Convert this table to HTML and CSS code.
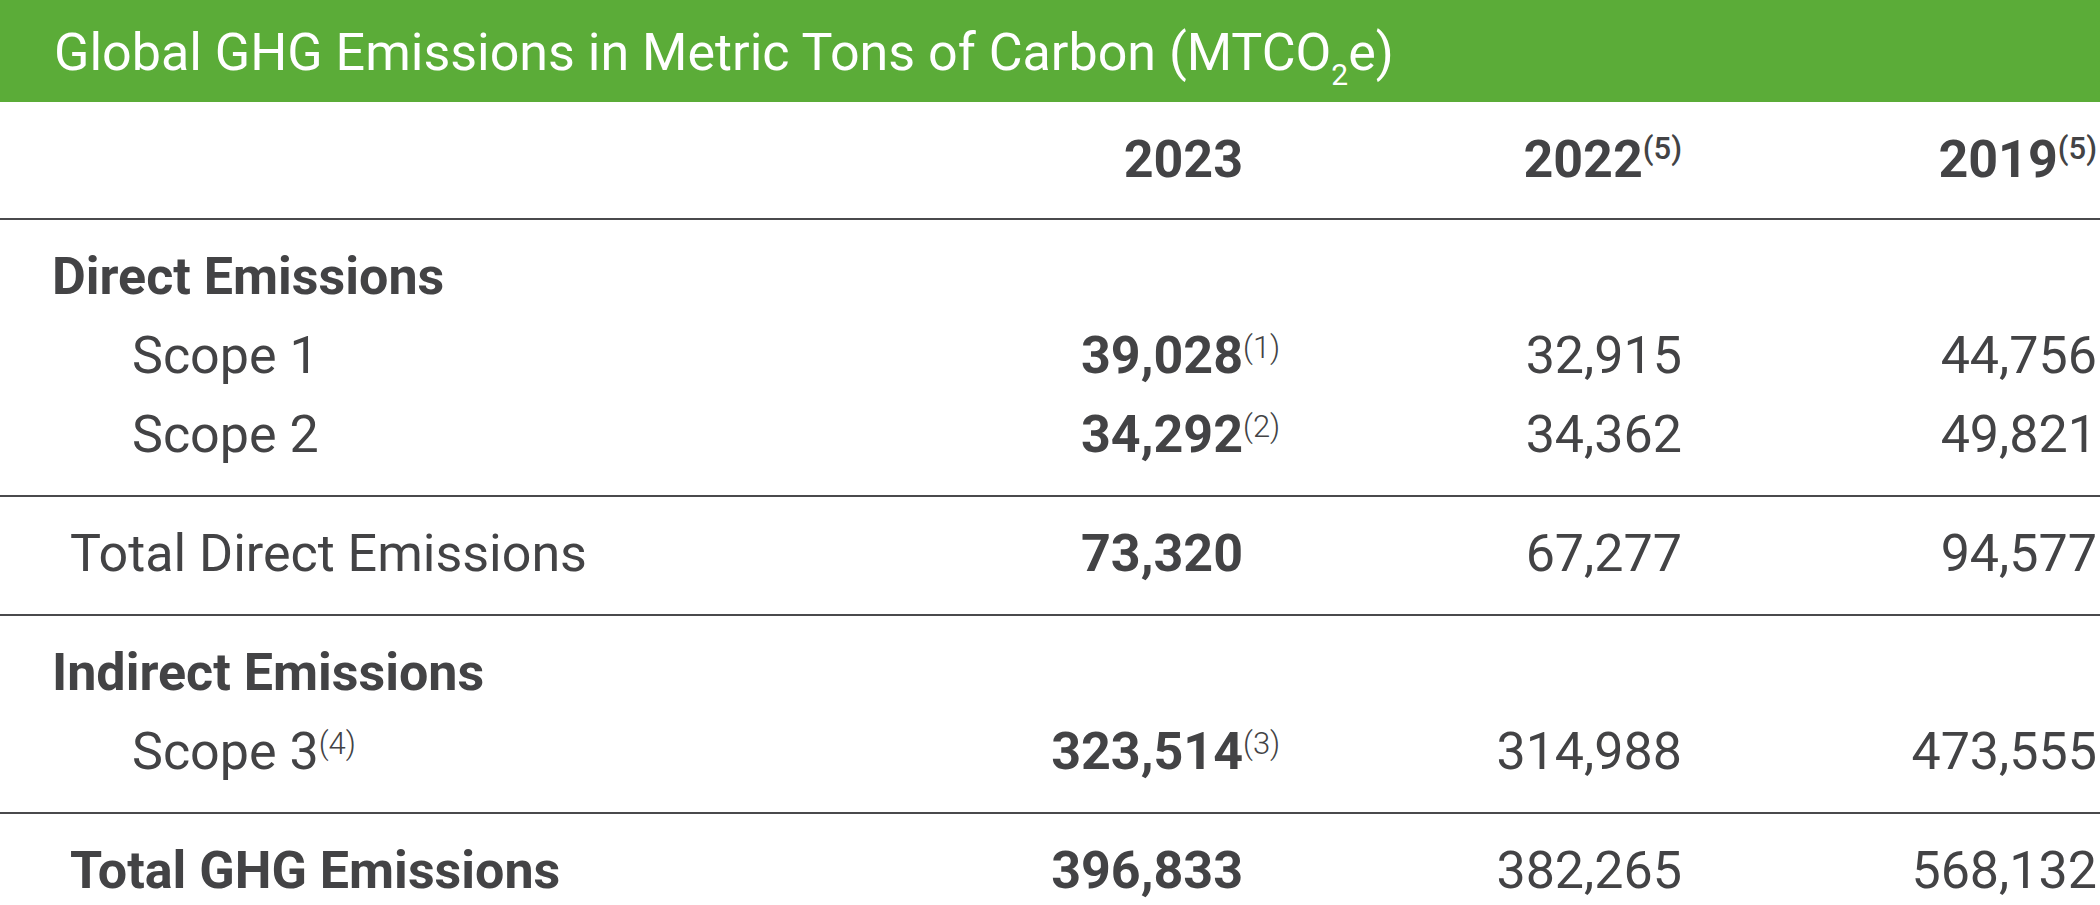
FILE: index.html
```html
<!DOCTYPE html>
<html lang="en">
<head>
<meta charset="utf-8">
<title>Global GHG Emissions</title>
<link rel="stylesheet" href="styles.css">
</head>
<body>
<section class="ghg">
  <h1 class="title">Global GHG Emissions in Metric Tons of Carbon (MTCO<sub class="sub">2</sub>e)</h1>

  <div class="group head">
    <div class="row">
      <div class="lbl"></div>
      <div class="num c1">2023<span class="fn"></span></div>
      <div class="num">2022<sup class="hsup">(5)</sup></div>
      <div class="num">2019<sup class="hsup">(5)</sup></div>
    </div>
  </div>

  <div class="group">
    <div class="row">
      <div class="lbl sect">Direct Emissions</div>
      <div></div><div></div><div></div>
    </div>
    <div class="row">
      <div class="lbl scope">Scope 1</div>
      <div class="num c1"><b>39,028</b><span class="fn">(1)</span></div>
      <div class="num">32,915</div>
      <div class="num">44,756</div>
    </div>
    <div class="row">
      <div class="lbl scope">Scope 2</div>
      <div class="num c1"><b>34,292</b><span class="fn">(2)</span></div>
      <div class="num">34,362</div>
      <div class="num">49,821</div>
    </div>
  </div>

  <div class="group">
    <div class="row">
      <div class="lbl total">Total Direct Emissions</div>
      <div class="num c1"><b>73,320</b><span class="fn"></span></div>
      <div class="num">67,277</div>
      <div class="num">94,577</div>
    </div>
  </div>

  <div class="group">
    <div class="row">
      <div class="lbl sect">Indirect Emissions</div>
      <div></div><div></div><div></div>
    </div>
    <div class="row">
      <div class="lbl scope">Scope 3<sup class="bsup">(4)</sup></div>
      <div class="num c1"><b>323,514</b><span class="fn">(3)</span></div>
      <div class="num">314,988</div>
      <div class="num">473,555</div>
    </div>
  </div>

  <div class="group last">
    <div class="row">
      <div class="lbl total strong">Total GHG Emissions</div>
      <div class="num c1"><b>396,833</b><span class="fn"></span></div>
      <div class="num">382,265</div>
      <div class="num">568,132</div>
    </div>
  </div>
</section>
</body>
</html>
```

FILE: styles.css
```css
html, body {
  margin: 0;
  padding: 0;
  background: #ffffff;
}

body {
  font-family: Roboto, "Liberation Sans", Arial, sans-serif;
  color: #434345;
  width: 2100px;
  overflow: hidden;
}

.ghg {
  width: 2100px;
}

.title {
  margin: 0;
  background: #5bac38;
  color: #ffffff;
  font-weight: 400;
  font-size: 52px;
  line-height: 98px;
  height: 98px;
  padding: 4px 0 0 54px;
  white-space: nowrap;
}

.sub {
  font-size: 30px;
  line-height: 0;
  vertical-align: -15px;
}

.group {
  padding: 17px 3px 21px 0;
  border-bottom: 2px solid #4a4a4c;
}

.group.head {
  padding-top: 18px;
  padding-bottom: 19px;
}

.group.last {
  border-bottom: none;
}

.row {
  display: grid;
  grid-template-columns: 1fr 300px 399px 415px;
  font-size: 52px;
  line-height: 79px;
  height: 79px;
  white-space: nowrap;
}

.head .row {
  font-weight: 700;
}

.num {
  text-align: right;
}

.num b {
  font-weight: 700;
}

.fn {
  display: inline-block;
  width: 40px;
  text-align: left;
  font-size: 31px;
  font-weight: 300;
  line-height: 0;
  vertical-align: 15px;
}

.hsup {
  font-size: 31px;
  font-weight: 500;
  line-height: 0;
  vertical-align: 18px;
}

.bsup {
  font-size: 31px;
  font-weight: 300;
  line-height: 0;
  vertical-align: 15px;
}

.lbl {
  text-align: left;
}

.sect {
  font-weight: 700;
  padding-left: 52px;
}

.scope {
  padding-left: 132px;
}

.total {
  padding-left: 70px;
}

.total.strong {
  font-weight: 700;
}
```
